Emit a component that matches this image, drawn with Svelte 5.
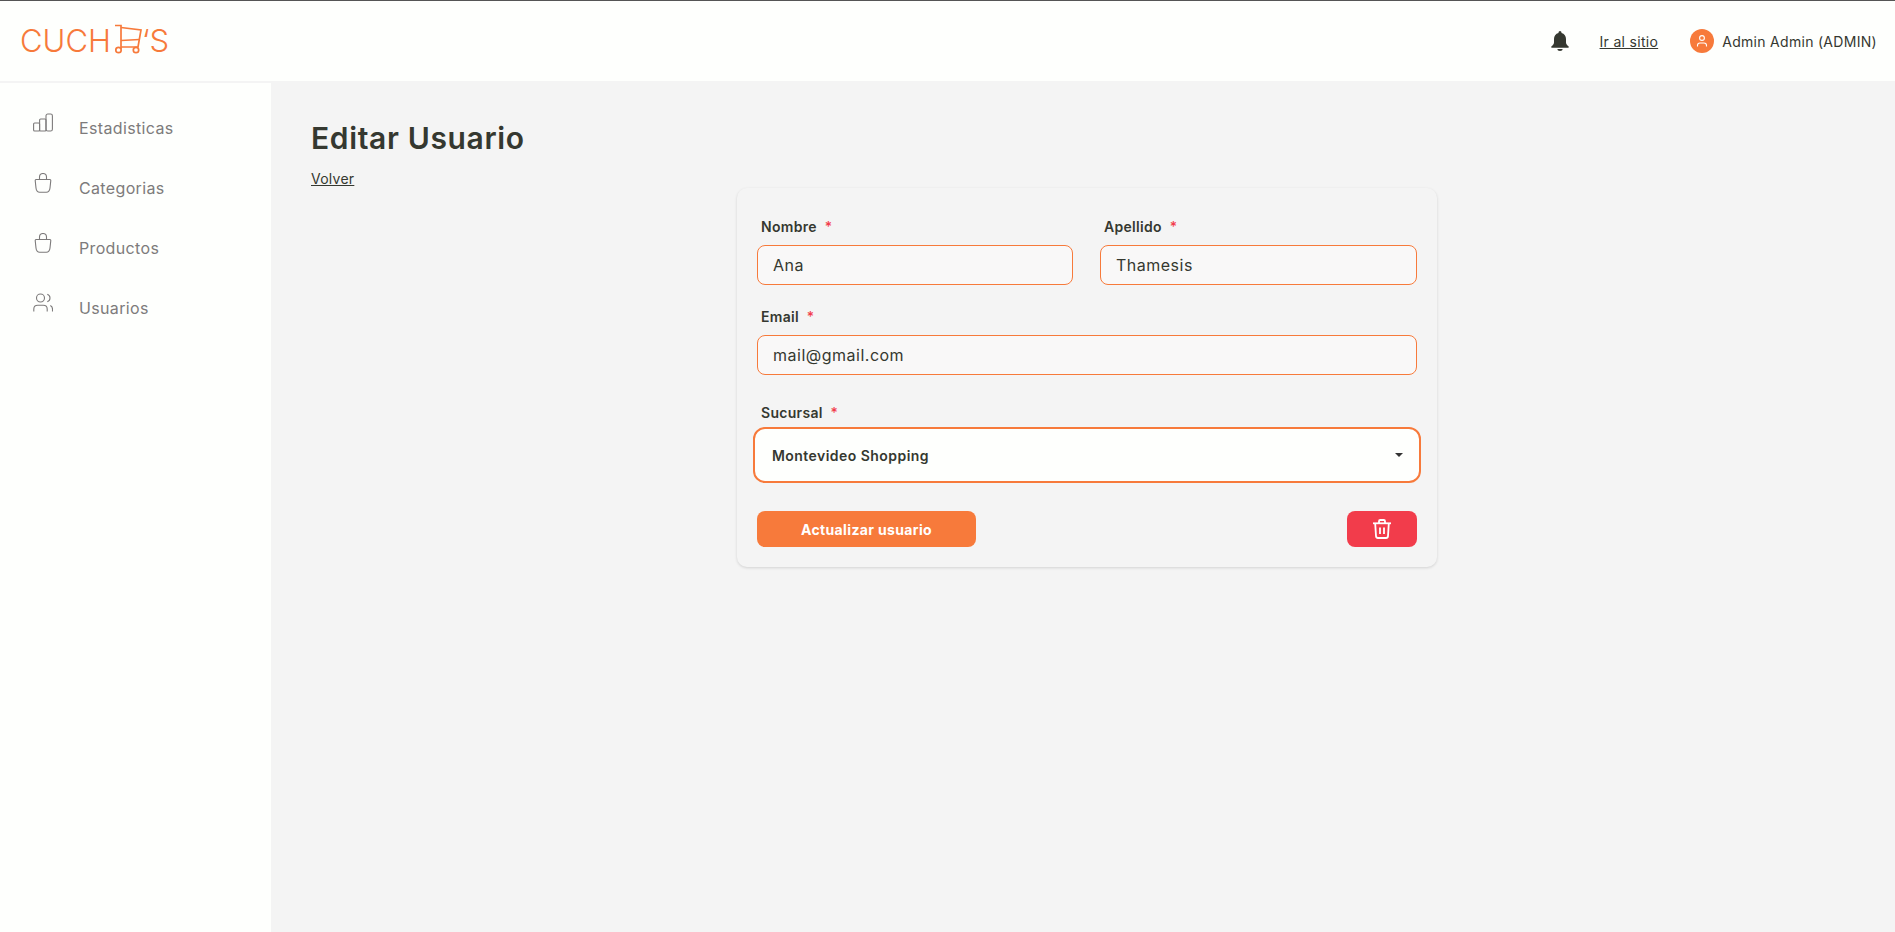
<script>
	const navItems = [
		{ label: 'Estadisticas', icon: 'chart' },
		{ label: 'Categorias', icon: 'bag' },
		{ label: 'Productos', icon: 'bag' },
		{ label: 'Usuarios', icon: 'users' }
	];
</script>

<div class="page">
	<header class="topbar">
		<div class="logo">
			<span>CUCH</span>
			<svg class="cart" viewBox="0 0 27 30" width="27" height="30" fill="none" stroke="#f77a3b" stroke-width="1.700">
				<path d="M0 1.500h6v23.500" />
				<path d="M6 3.500l20 2.500-3 17H6" />
				<path d="M6 16.500l18.500-1" />
				<circle cx="3.500" cy="26" r="2.700" />
				<circle cx="21" cy="26" r="2.700" />
			</svg>
			<span>‘S</span>
		</div>
		<div class="top-actions">
			<svg class="bell" viewBox="0 0 18 20" width="18" height="20" fill="#353830">
				<path d="M9 0a1.500 1.500 0 0 1 1.500 1.500v.6c2.900.7 4.500 3.100 4.500 6v3.400c0 1.500 1 2.600 2.600 3.900.5.500.2 1.300-.5 1.300H.900c-.7 0-1-.8-.5-1.300C2 14.100 3 13 3 11.500V8.100c0-2.900 1.600-5.300 4.500-6v-.6A1.500 1.500 0 0 1 9 0z" />
				<path d="M6.300 18h5.400a2.700 2 0 0 1-5.400 0z" />
			</svg>
			<a href="#top" class="site-link">Ir al sitio</a>
			<div class="user">
				<span class="avatar">
					<svg viewBox="0 0 14 14" width="14" height="14" fill="none" stroke="#fff" stroke-width="1.100">
						<circle cx="7" cy="4" r="2.400" />
						<path d="M2.500 12.500v-1c0-1.500 1.200-2.500 2.500-2.500h4c1.300 0 2.500 1 2.500 2.500v1" />
					</svg>
				</span>
				<span>Admin Admin (ADMIN)</span>
			</div>
		</div>
	</header>

	<div class="body">
		<nav class="sidebar">
			{#each navItems as item}
				<a href="#top" class="nav-item">
					<svg class="nav-icon" viewBox="0 0 20 20" width="20" height="20" fill="none" stroke="#7d7b7b" stroke-width="1.100">
						{#if item.icon === 'chart'}
							<rect x="0.600" y="10" width="6" height="8" rx="1" />
							<rect x="6.600" y="6" width="6.400" height="12" rx="1" />
							<rect x="13" y="1" width="6.400" height="17" rx="1.800" />
						{:else if item.icon === 'bag'}
							<path d="M3 6.500h14c.5 0 .8.400.8 1l-.8 7.500c-.3 2.600-1.700 4.200-3.700 4.200H6.700c-2 0-3.400-1.600-3.700-4.200L2.200 7.500c0-.6.300-1 .8-1z" />
							<path d="M6.500 6.500V4a3.500 3.500 0 0 1 7 0v2.500" />
						{:else}
							<circle cx="7.500" cy="5" r="4" />
							<path d="M0.800 18.500v-2.500c0-2.200 1.700-3.800 4-3.800h5.400c2.300 0 4 1.600 4 3.800v2.500" />
							<path d="M14.300 1.200c1.800.7 2.700 2 2.700 3.800s-.9 3.100-2.700 3.800" />
							<path d="M19.500 18.500v-2.500c0-1.600-.8-2.900-2.200-3.500" />
						{/if}
					</svg>
					<span>{item.label}</span>
				</a>
			{/each}
		</nav>

		<main class="content">
			<h1>Editar Usuario</h1>
			<a href="#top" class="back">Volver</a>

			<form class="card">
				<div class="row">
					<div class="field">
						<span class="label">Nombre <i>*</i></span>
						<input value="Ana" />
					</div>
					<div class="field">
						<span class="label">Apellido <i>*</i></span>
						<input value="Thamesis" />
					</div>
				</div>
				<div class="field email">
					<span class="label">Email <i>*</i></span>
					<input value="mail@gmail.com" />
				</div>
				<div class="field branch">
					<span class="label">Sucursal <i>*</i></span>
					<div class="select">
						<span>Montevideo Shopping</span>
						<svg viewBox="0 0 8 4" width="8" height="4" fill="#333"><path d="M0 0h8L4 4z" /></svg>
					</div>
				</div>
				<div class="actions">
					<button type="button" class="save">Actualizar usuario</button>
					<button type="button" class="delete" aria-label="Eliminar">
						<svg viewBox="0 0 18 20" width="18" height="20" fill="none" stroke="#fff" stroke-width="1.800">
							<path d="M0 4.300h18" />
							<path d="M6 4V2.200c0-.7.500-1.200 1.200-1.200h3.600c.7 0 1.200.5 1.200 1.200V4" />
							<path d="M2.200 4.500l.8 12.600c.1 1 .9 1.900 2 1.900h8c1.100 0 1.900-.9 2-1.900l.8-12.600" />
							<path d="M7 8.500v6.500M11 8.500v6.500" />
						</svg>
					</button>
				</div>
			</form>
		</main>
	</div>
</div>

<style>
	:global(body) {
		margin: 0;
		background: #f4f4f4;
		font-family: Inter, 'Noto Sans', sans-serif;
		color: #353830;
	}

	.page {
		min-height: 932px;
		display: flex;
		flex-direction: column;
	}

	.topbar {
		height: 80px;
		border-top: 1px solid #555;
		background: #fefffd;
		display: flex;
		align-items: center;
		justify-content: space-between;
		padding: 0 18px 0 20px;
	}

	.logo {
		display: flex;
		align-items: center;
		color: #f77a3b;
		font-size: 31px;
		font-weight: 300;
		line-height: 32px;
	}

	.cart {
		margin: 0 0 4px 4px;
	}

	.top-actions {
		display: flex;
		align-items: center;
		font-size: 14px;
		letter-spacing: 0.3px;
	}

	.bell {
		margin-right: 31px;
	}

	.site-link {
		color: #353830;
		margin-right: 32px;
	}

	.user {
		display: flex;
		align-items: center;
		gap: 8px;
	}

	.avatar {
		width: 24px;
		height: 24px;
		border-radius: 50%;
		background: #f77a3b;
		display: flex;
		align-items: center;
		justify-content: center;
	}

	.body {
		flex: 1;
		display: flex;
	}

	.sidebar {
		width: 271px;
		flex: none;
		background: #fefffd;
		margin-top: 2px;
		padding-top: 15px;
		box-sizing: border-box;
	}

	.nav-item {
		height: 60px;
		display: flex;
		align-items: center;
		padding-left: 33px;
		color: #7d7b7b;
		font-size: 16px;
		letter-spacing: 0.35px;
		text-decoration: none;
	}

	.nav-icon {
		margin-right: 26px;
		transform: translateY(-5px);
	}

	.content {
		flex: 1;
		padding: 37px 32px 0 40px;
		min-width: 0;
	}

	h1 {
		margin: 0 0 12px;
		font-size: 30px;
		line-height: 40px;
		font-weight: 600;
		letter-spacing: 0.65px;
		color: #353830;
	}

	.back {
		display: block;
		width: max-content;
		font-size: 14px;
		line-height: 17px;
		letter-spacing: 0.25px;
		color: #353830;
	}

	.card {
		width: 700px;
		box-sizing: border-box;
		margin: 1px auto 0;
		padding: 29px 20px 20px;
		background: #f4f4f4;
		border-radius: 10px;
		box-shadow: 0 1px 3px rgba(0, 0, 0, 0.14);
	}

	.row {
		display: grid;
		grid-template-columns: 316px 1fr;
		gap: 27px;
	}

	.label {
		display: block;
		padding-left: 4px;
		margin-bottom: 8px;
		font-size: 14px;
		line-height: 20px;
		font-weight: 600;
		letter-spacing: 0.3px;
		color: #353830;
	}

	.label i {
		color: #f23c4b;
		font-style: normal;
		margin-left: 4px;
		font-weight: 500;
	}

	input {
		display: block;
		width: 100%;
		height: 40px;
		box-sizing: border-box;
		padding: 0 15px;
		background: #f9f8f8;
		border: 1px solid #f77a3b;
		border-radius: 8px;
		font: 400 16px Inter, 'Noto Sans', sans-serif;
		letter-spacing: 0.5px;
		color: #353830;
		outline: none;
	}

	.email {
		margin-top: 22px;
	}

	.branch {
		margin-top: 28px;
	}

	.branch .label {
		margin-bottom: 4px;
	}

	.select {
		margin: 0 -4px;
		height: 56px;
		box-sizing: border-box;
		padding: 0 16px 0 17px;
		background: #fefffd;
		border: 2px solid #f77a3b;
		border-radius: 12px;
		display: flex;
		align-items: center;
		justify-content: space-between;
		font-size: 14px;
		font-weight: 600;
		letter-spacing: 0.45px;
		color: #353830;
	}

	.actions {
		display: flex;
		justify-content: space-between;
		margin-top: 28px;
	}

	button {
		height: 36px;
		border: 0;
		border-radius: 8px;
		color: #fff;
		font: 700 14px Inter, 'Noto Sans', sans-serif;
		letter-spacing: 0.35px;
		display: flex;
		align-items: center;
		justify-content: center;
	}

	.save {
		width: 219px;
		background: #f77a3b;
	}

	.delete {
		width: 70px;
		background: #f23c4b;
	}
</style>
